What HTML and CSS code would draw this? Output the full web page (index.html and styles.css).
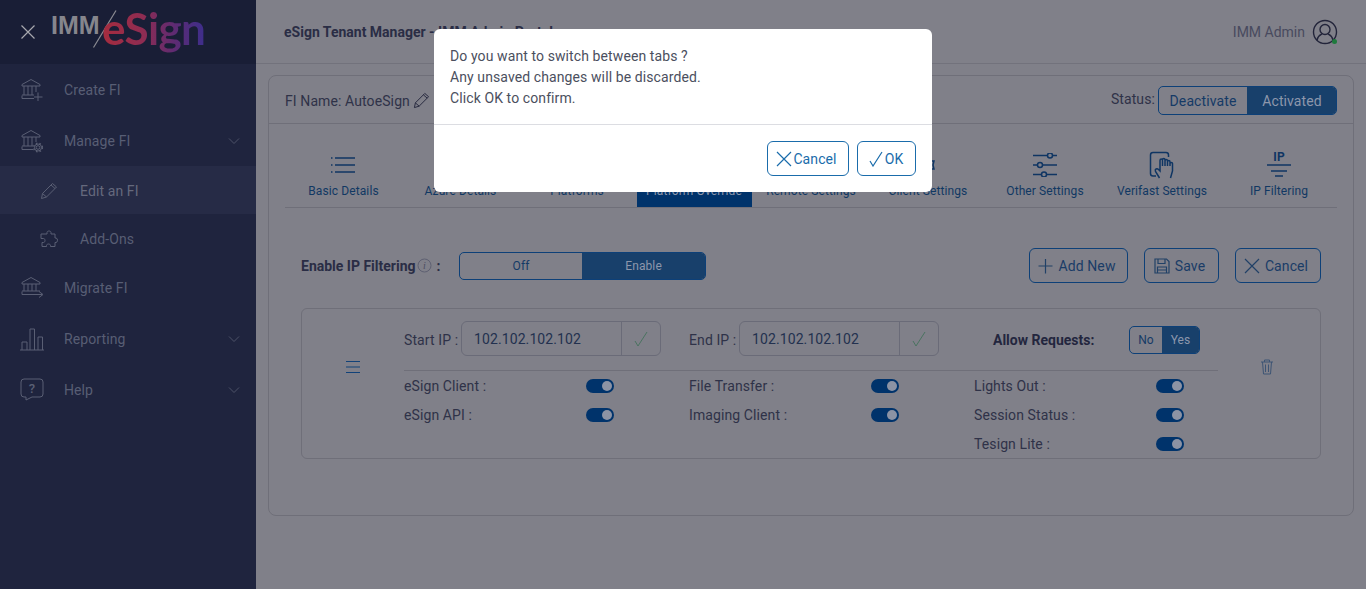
FILE: index.html
```html
<!DOCTYPE html>
<html lang="en">
<head>
<meta charset="utf-8">
<title>eSign Tenant Manager</title>
<link rel="stylesheet" href="styles.css">
</head>
<body>
<div class="app">
  <aside class="sidebar">
    <div class="brand">
      <svg class="close-x" width="16" height="16" viewBox="0 0 16 16"><path d="M1.500 1.500 14.500 14.500M14.500 1.500 1.500 14.500"/></svg>
      <div class="logo">
        <span class="logo-imm">IMM</span>
        <svg class="logo-slash" width="26" height="40" viewBox="0 0 26 40"><path d="M24 .5 1.500 37.500"/></svg>
        <span class="logo-esign">eSign</span>
      </div>
    </div>
    <nav class="menu">
      <a class="item">
        <svg class="ico" width="24" height="24" viewBox="0 0 24 24"><path d="M2 6.500 11 1.500 20 6.500V8H2ZM4 8V17M8 8V17M12 8V17M16 8V14M2 17H14M2 20.500V17.500M2 20.500H14M18 14.500V23M14 19H22.500"/></svg>
        <span>Create FI</span>
      </a>
      <a class="item">
        <svg class="ico" width="24" height="24" viewBox="0 0 24 24"><path d="M2 6.500 11 1.500 20 6.500V8H2ZM4 8V17M8 8V17M12 8V17M16 8V13M2 17H13M2 20.500V17.500M2 20.500H13"/><circle cx="18" cy="18.500" r="1.800"/><circle cx="18" cy="18.500" r="3.500"/><circle class="cog" cx="18" cy="18.500" r="4.400"/></svg>
        <span>Manage FI</span>
        <svg class="chev" width="12" height="8" viewBox="0 0 12 8"><path d="M1 1.500 6 6.500 11 1.500"/></svg>
      </a>
      <a class="item sub current">
        <svg class="ico" width="18" height="18" viewBox="0 0 18 18"><path d="M1.500 16.500 2.500 11.500 12.500 1.500 16.500 5 6.500 15ZM2.500 11.500 6.500 15M11 3 15 6.500"/></svg>
        <span>Edit an FI</span>
      </a>
      <a class="item sub">
        <svg class="ico" width="18" height="18" viewBox="0 0 18 18"><path d="M7 2.500C7 .5 11 .5 11 2.500V4H15V8H16C18 8 18 12.500 16 12.500H15V16.500H10.500V15.500C10.500 13.500 6.500 13.500 6.500 15.500V16.500H2V12.500H3.500C5.500 12.500 5.500 8.500 3.500 8.500H1V4H7Z"/></svg>
        <span>Add-Ons</span>
      </a>
      <a class="item">
        <svg class="ico" width="24" height="24" viewBox="0 0 24 24"><path d="M2 6.500 11 1.500 20 6.500V8H2ZM4 8V15M8 8V15M12 8V15M16 8V15M2 15H20M2 18.500V15.500M2 18.500H22M19 15.500 23 18.500 19 21.500"/></svg>
        <span>Migrate FI</span>
      </a>
      <a class="item">
        <svg class="ico" width="24" height="24" viewBox="0 0 24 24"><path d="M0 23H24M2 23V15H7V23M10 23V2H14.500V23M18 23V10H22.500V23"/></svg>
        <span>Reporting</span>
        <svg class="chev" width="12" height="8" viewBox="0 0 12 8"><path d="M1 1.500 6 6.500 11 1.500"/></svg>
      </a>
      <a class="item">
        <svg class="ico" width="24" height="24" viewBox="0 0 24 24"><path d="M4 1H20Q23 1 23 4V16Q23 19 20 19H12L6 22V19H4Q1 19 1 16V4Q1 1 4 1Z"/><text x="12" y="15" class="ico-q">?</text></svg>
        <span>Help</span>
        <svg class="chev" width="12" height="8" viewBox="0 0 12 8"><path d="M1 1.500 6 6.500 11 1.500"/></svg>
      </a>
    </nav>
  </aside>

  <main class="main">
    <header class="topbar">
      <h1 class="title">eSign Tenant Manager - IMM Admin Portal</h1>
      <div class="user">
        <span>IMM Admin</span>
        <span class="avatar">
          <svg width="26" height="26" viewBox="0 0 26 26"><circle cx="13" cy="13" r="11.500"/><circle cx="13" cy="10.500" r="5"/><path d="M5 21C6 16.500 9 15.500 10 15M21 21C20 16.500 17 15.500 16 15"/></svg>
          <i class="online"></i>
        </span>
      </div>
    </header>

    <section class="card">
      <div class="card-head">
        <div class="fi-name">FI Name: AutoeSign
          <svg width="17" height="17" viewBox="0 0 18 18"><path d="M1.500 16.500 2.500 11.500 12.500 1.500 16.500 5 6.500 15ZM2.500 11.500 6.500 15M11 3 15 6.500"/></svg>
        </div>
        <div class="status">
          <span>Status:</span>
          <div class="seg seg-status"><button class="seg-btn">Deactivate</button><button class="seg-btn on">Activated</button></div>
        </div>
      </div>

      <div class="card-body">
        <ul class="tabs">
          <li class="tab">
            <svg width="26" height="20" viewBox="0 0 26 20"><path d="M5 3H25M5 10H25M5 17H25M1 3H2.500M1 10H2.500M1 17H2.500"/></svg>
            <span>Basic Details</span>
          </li>
          <li class="tab"><svg width="26" height="20" viewBox="0 0 26 20"></svg><span>Azure Details</span></li>
          <li class="tab"><svg width="26" height="20" viewBox="0 0 26 20"></svg><span>Platforms</span></li>
          <li class="tab active"><svg width="26" height="20" viewBox="0 0 26 20"></svg><span>Platform Override</span></li>
          <li class="tab"><svg width="26" height="20" viewBox="0 0 26 20"></svg><span>Remote Settings</span></li>
          <li class="tab">
            <svg width="26" height="20" viewBox="0 0 26 20"><circle cx="13" cy="10" r="3"/><path d="M13 3 15 6H19L18 10 19 14H15L13 17 11 14H7L8 10 7 6H11Z"/></svg>
            <span>Client Settings</span>
          </li>
          <li class="tab">
            <svg width="26" height="24" viewBox="0 0 26 24"><path d="M1 2.500H15M21 2.500H25M1 12H5M11 12H25M1 21.500H9M15 21.500H25"/><circle cx="18" cy="2.500" r="2.500"/><circle cx="8" cy="12" r="2.500"/><circle cx="12" cy="21.500" r="2.500"/></svg>
            <span>Other Settings</span>
          </li>
          <li class="tab">
            <svg width="26" height="28" viewBox="0 0 26 28"><path d="M7 25H4Q1.500 25 1.500 22.500V4Q1.500 1.500 4 1.500H17Q19.500 1.500 19.500 4V6M10.500 27 6.500 20.500C5.500 18 8 17 9.500 18.500L11 20V9.500C11 7.500 13.500 7.500 13.500 9.500V15M13.500 9C13.500 7 16 7 16 9V15M16 10C16 8 18.500 8 18.500 10V15M18.500 11C18.500 9 21 9 21 11V15M21 12.500C21 11 23.500 11 23.500 12.500V20L21.500 27"/></svg>
            <span>Verifast Settings</span>
          </li>
          <li class="tab">
            <svg class="ip-ico" width="26" height="30" viewBox="0 -2 26 30"><text x="13" y="9" class="ip-text">IP</text><path d="M1 13H25M5 19H21M9 24H17"/></svg>
            <span>IP Filtering</span>
          </li>
        </ul>

        <div class="ip-panel">
          <div class="filter-row">
            <div class="filter-left">
              <strong class="filter-label">Enable IP Filtering</strong>
              <svg class="info" width="15" height="15" viewBox="0 0 15 15"><circle cx="7.500" cy="7.500" r="6.500"/><text x="7.500" y="11" class="info-i">i</text></svg>
              <strong class="colon">:</strong>
              <div class="seg seg-filter"><button class="seg-btn">Off</button><button class="seg-btn on">Enable</button></div>
            </div>
            <div class="actions">
              <button class="btn btn-add">
                <svg width="16" height="16" viewBox="0 0 16 16"><path d="M8.500 1V15.500M1.500 8H15.500"/></svg>Add New
              </button>
              <button class="btn btn-save">
                <svg width="16" height="16" viewBox="0 0 16 16"><path d="M1 1H12.500L15 3.500V15H1ZM4 1V5.500H11V1M3.500 15V9H12.500V15M3.500 12H12.500"/></svg>Save
              </button>
              <button class="btn btn-cancel">
                <svg width="16" height="16" viewBox="0 0 16 16"><path d="M1 1 15 15M15 1 1 15"/></svg>Cancel
              </button>
            </div>
          </div>

          <div class="rule">
            <div class="drag">
              <svg width="16" height="14" viewBox="0 0 16 14"><path d="M1 1.500H15M1 7H15M1 12.500H15"/></svg>
            </div>
            <div class="rule-main">
              <div class="ip-row">
                <div class="ip-field">
                  <label>Start IP :</label>
                  <div class="ip-input"><span class="ip-value">102.102.102.102</span><span class="ip-check"><svg width="14" height="16" viewBox="0 0 14 16"><path d="M1 10 4 15 13 1"/></svg></span></div>
                </div>
                <div class="ip-field">
                  <label>End IP :</label>
                  <div class="ip-input"><span class="ip-value">102.102.102.102</span><span class="ip-check"><svg width="14" height="16" viewBox="0 0 14 16"><path d="M1 10 4 15 13 1"/></svg></span></div>
                </div>
                <div class="allow">
                  <strong>Allow Requests:</strong>
                  <div class="seg seg-allow"><button class="seg-btn">No</button><button class="seg-btn on">Yes</button></div>
                </div>
              </div>
              <div class="flags">
                <div class="flag"><span>eSign Client :</span><i class="switch"></i></div>
                <div class="flag"><span>File Transfer :</span><i class="switch"></i></div>
                <div class="flag"><span>Lights Out :</span><i class="switch"></i></div>
                <div class="flag"><span>eSign API :</span><i class="switch"></i></div>
                <div class="flag"><span>Imaging Client :</span><i class="switch"></i></div>
                <div class="flag"><span>Session Status :</span><i class="switch"></i></div>
                <div class="flag flag-3"><span>Tesign Lite :</span><i class="switch"></i></div>
              </div>
            </div>
            <div class="trash">
              <svg width="14" height="16" viewBox="0 0 14 16"><path d="M1 3H13M4.500 3V1H9.500V3M2.500 3 3.500 15H10.500L11.500 3M5.500 5.500V13M8.500 5.500V13"/></svg>
            </div>
          </div>
        </div>
      </div>
    </section>
  </main>
</div>

<div class="modal" role="dialog">
  <div class="modal-body">
    <p>Do you want to switch between tabs ?</p>
    <p>Any unsaved changes will be discarded.</p>
    <p>Click OK to confirm.</p>
  </div>
  <div class="modal-foot">
    <button class="mbtn mbtn-cancel"><svg width="16" height="16" viewBox="0 0 16 16"><path d="M1 1 15 15M15 1 1 15"/></svg>Cancel</button>
    <button class="mbtn mbtn-ok"><svg width="14" height="16" viewBox="0 0 14 16"><path d="M1 10 4 15 13 1"/></svg>OK</button>
  </div>
</div>
</body>
</html>
```
FILE: styles.css
```css
* { box-sizing: border-box; }
html, body { margin: 0; height: 589px; overflow: hidden; }
body { font-family: Roboto, "Liberation Sans", sans-serif; font-size: 14px; letter-spacing: .1px; color: #2c2f47; background: #808089; }
button { font-family: inherit; letter-spacing: inherit; }
p { margin: 0; }
svg { display: block; flex: none; fill: none; stroke-width: 1; }

.app { display: flex; height: 589px; }

/* sidebar */
.sidebar { width: 256px; flex: none; background: #1f243e; }
.brand { height: 64px; background: #191e36; display: flex; align-items: center; padding-left: 20px; }
.close-x { stroke: #a7a8ae; stroke-width: 1.2; }
.logo { position: relative; width: 160px; height: 50px; margin-left: 15px; display: flex; align-items: flex-start; letter-spacing: 0; }
.logo-imm { font-family: "Liberation Sans", sans-serif; font-weight: 700; font-size: 25px; line-height: 28px; margin-top: 4px; color: #86868d; }
.logo-slash { position: absolute; left: 41px; top: 3px; stroke: #8c8c93; stroke-width: 1.2; }
.logo-esign { position: absolute; left: 51px; top: -9px; font-family: Lato, sans-serif; font-weight: 700; font-size: 44px; line-height: 60px; letter-spacing: -.6px; color: transparent; background: linear-gradient(90deg, #a52c3e 0%, #8e2c52 40%, #5e2b72 70%, #3d2e8c 100%); -webkit-background-clip: text; background-clip: text; }

.item { position: relative; display: flex; align-items: center; height: 51px; padding-left: 20px; color: #585e74; font-size: 14px; }
.item > span { position: absolute; left: 64px; }
.ico { stroke: #5a5f74; }
.cog { stroke-width: 1.4; stroke-dasharray: 1.6 2; }
.item.sub { height: 48px; padding-left: 40px; padding-top: 2px; }
.item.sub > span { left: 80px; }
.item.current { background: #262b46; color: #65697d; }
.chev { position: absolute; right: 16px; stroke: #4d5268; }
.ico-q { font-family: Roboto, sans-serif; font-size: 13px; font-weight: 500; text-anchor: middle; fill: #5a5f74; stroke: none; }

/* main */
.main { flex: 1; min-width: 0; padding: 0 12px; }
.topbar { height: 64px; margin: 0 -12px; padding: 0 28px; border-bottom: 1px solid #72727c; display: flex; align-items: center; justify-content: space-between; }
.title { margin: 0; font-size: 14px; font-weight: 700; letter-spacing: 0; color: #2a2d45; }
.user { display: flex; align-items: center; gap: 7px; letter-spacing: 0; color: #484a5e; }
.avatar { position: relative; display: block; }
.avatar svg { stroke: #22243a; stroke-width: 1.4; }
.online { position: absolute; right: 1px; bottom: 1px; width: 5px; height: 5px; border-radius: 50%; background: #1f7a3d; }

.card { margin-top: 11px; height: 441px; border: 1px solid #6f6f79; border-radius: 8px; }
.card-head { height: 48px; padding: 2px 16px 0; border-bottom: 1px solid #6f6f79; display: flex; align-items: center; justify-content: space-between; }
.fi-name { display: flex; align-items: center; gap: 3px; color: #2f3248; }
.fi-name svg { stroke: #23253b; }
.status { display: flex; align-items: center; gap: 3px; color: #2f3248; }
.status > span { margin-top: -3px; }

.seg { display: flex; border: 1px solid #0d4078; border-radius: 5px; overflow: hidden; }
.seg-btn { border: 0; padding: 0; background: transparent; color: #153a66; }
.seg-btn.on { background: #18406b; color: #8d97ab; }
.seg-status { width: 179px; height: 29px; }
.seg-status .seg-btn { font-size: 14px; }
.seg-status .seg-btn:first-child { width: 88px; }
.seg-status .seg-btn.on { flex: 1; padding-left: 1px; }

.card-body { padding: 0 16px; }
.tabs { list-style: none; margin: 0; padding: 0; display: grid; grid-template-columns: repeat(9, 117px); height: 84px; border-bottom: 1px solid #6f6f79; }
.tab { position: relative; display: flex; flex-direction: column; align-items: center; justify-content: flex-end; padding: 0 1px 9px 0; font-size: 12px; color: #113863; }
.tab:nth-child(-n+2) { padding-right: 0; }
.tab svg { position: absolute; left: 45px; top: 41px; transform: translateY(-50%); stroke: #0f3563; stroke-width: 1.5; }
.tab.active { background: #00336b; margin: 0 1px; color: #8d97ab; }
.ip-text { font-family: Roboto, sans-serif; font-size: 12px; font-weight: 700; text-anchor: middle; fill: #0f3563; stroke: none; }

.ip-panel { padding: 40px 16px 0; }
.filter-row { display: flex; align-items: center; justify-content: space-between; height: 35px; }
.filter-left { display: flex; align-items: center; }
.filter-label { font-size: 14px; font-weight: 700; letter-spacing: 0; color: #2a2d45; }
.info { margin-left: 1px; stroke: #5e6072; }
.info-i { font-family: "Liberation Serif", serif; font-style: italic; font-size: 10px; text-anchor: middle; fill: #4c4e62; stroke: none; }
.colon { margin-left: 5px; font-size: 14px; color: #2a2d45; }
.seg-filter { width: 247px; height: 28px; margin-left: 18px; }
.seg-filter .seg-btn { font-size: 12px; padding-left: 1px; }
.seg-filter .seg-btn:first-child { width: 122px; }
.seg-filter .seg-btn.on { flex: 1; }

.actions { display: flex; gap: 16px; }
.btn { height: 35px; display: flex; align-items: center; justify-content: center; gap: 5px; border: 1px solid #0d4078; border-radius: 6px; background: transparent; color: #1a3c67; font-size: 14px; padding: 0 4px 0 0; }
.btn svg { stroke: #214167; stroke-width: 1.2; }
.btn-add { width: 99px; }
.btn-save { width: 75px; }
.btn-cancel { width: 86px; }

.rule { margin-top: 25px; height: 151px; border: 1px solid #6f6f79; border-radius: 6px; display: flex; }
.drag { width: 102px; flex: none; display: flex; align-items: center; justify-content: center; padding-bottom: 34px; }
.drag svg { stroke: #114279; stroke-width: 1.2; }
.rule-main { width: 814px; flex: none; }
.ip-row { height: 62px; padding-top: 12px; border-bottom: 1px solid #6f6f79; display: grid; grid-template-columns: 285px 285px 1fr; }
.ip-field { display: flex; align-items: flex-start; }
.ip-field label { width: 57px; height: 35px; line-height: 38px; flex: none; color: #2f3248; }
.ip-field + .ip-field label { width: 50px; }
.ip-input { width: 200px; height: 35px; border: 1px solid #6a6b78; border-radius: 6px; display: flex; align-items: center; }
.ip-value { flex: 1; padding-left: 12px; color: #23314f; }
.ip-check { width: 39px; height: 100%; border-left: 1px solid #6a6b78; display: flex; align-items: center; justify-content: center; }
.ip-check svg { stroke: #4a7360; stroke-width: 1; }
.allow { display: flex; align-items: center; height: 35px; padding: 2px 0 0 19px; }
.allow strong { width: 136px; font-size: 14px; letter-spacing: 0; color: #23263e; }
.seg-allow { width: 71px; height: 28px; }
.seg-allow .seg-btn { font-size: 12px; }
.seg-allow .seg-btn:first-child { width: 32px; }
.seg-allow .seg-btn.on { flex: 1; }

.flags { display: grid; grid-template-columns: 285px 285px 285px; grid-auto-rows: 29px; }
.flag { width: 210px; display: flex; align-items: center; justify-content: space-between; color: #2f3248; }
.flag-3 { grid-column: 3; }
.switch { position: relative; display: block; width: 28px; height: 14px; border-radius: 7px; background: #00336b; }
.switch::after { content: ""; position: absolute; right: 2px; top: 2px; width: 10px; height: 10px; border-radius: 50%; background: #8c93a4; }
.trash { flex: 1; display: flex; align-items: center; justify-content: center; padding: 0 4px 34px 0; }
.trash svg { stroke: #3d5474; }

/* modal */
.modal { position: absolute; left: 434px; top: 29px; width: 498px; height: 163px; background: #fff; border-radius: 6px; }
.modal-body { height: 96px; padding: 17px 16px 0; color: #4b4f5e; line-height: 21px; border-bottom: 1px solid #dcdde2; }
.modal-foot { display: flex; justify-content: flex-end; gap: 8px; padding: 16px 16px 0; }
.mbtn { height: 35px; display: flex; align-items: center; justify-content: center; gap: 1px; border: 1px solid #1a6cab; border-radius: 6px; background: #fff; color: #1a6cab; font-size: 14px; padding: 0 3px 0 0; }
.mbtn svg { stroke: #1a6cab; stroke-width: 1.2; }
.mbtn-cancel { width: 82px; }
.mbtn-ok { width: 59px; gap: 2px; padding-right: 1px; }
```
